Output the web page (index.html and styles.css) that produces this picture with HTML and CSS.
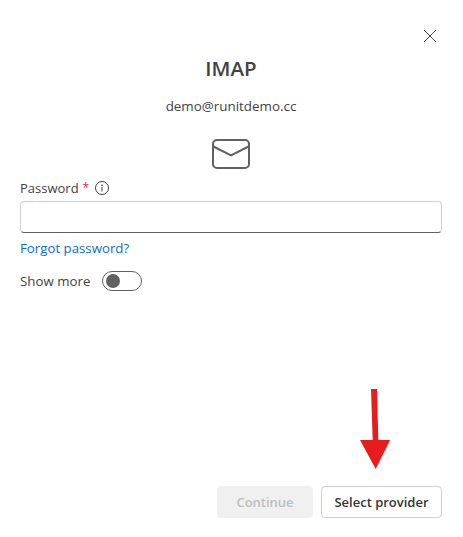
FILE: index.html
```html
<!DOCTYPE html>
<html>
<head lang="en">
    <meta charset="UTF-8">
    <title>IMAP</title>
    <link rel="stylesheet" href="styles.css">
</head>
<body>
<div class="dialog">
    <div class="close-row">
        <svg class="close" width="14" height="14" viewBox="0 0 14 14"><path d="M1 1l12 12M13 1L1 13" stroke="#424242" stroke-width="1" fill="none"/></svg>
    </div>
    <h1 class="title">IMAP</h1>
    <div class="email">demo@runitdemo.cc</div>
    <div class="icon-row">
        <svg width="38" height="30" viewBox="0 0 38 30"><rect x="1" y="1" width="36" height="28" rx="4" fill="none" stroke="#616161" stroke-width="2"/><path d="M1.5 7.5L19 16.5L36.5 7.5" fill="none" stroke="#616161" stroke-width="2"/></svg>
    </div>
    <div class="label">
        <span>Password</span><span class="req">*</span>
        <svg class="info" width="14" height="14" viewBox="0 0 14 14"><circle cx="7" cy="7" r="6.5" fill="none" stroke="#424242"/><path d="M7 6v4.5" stroke="#424242" fill="none"/><circle cx="7" cy="4.2" r="0.8" fill="#424242"/></svg>
    </div>
    <div class="input"></div>
    <a class="forgot">Forgot password?</a>
    <div class="show-more">
        <span>Show more</span>
        <div class="toggle"><div class="knob"></div></div>
    </div>
    <div class="footer">
        <button class="btn disabled">Continue</button>
        <button class="btn">Select provider</button>
    </div>
</div>
<svg class="arrow" width="30" height="81" viewBox="0 0 30 81"><path d="M11 0h6l1.3 51H30L15.7 80 0 51h12.7z" fill="#e81c1c"/></svg>
</body>
</html>
```

FILE: styles.css
```css
*{
    margin: 0;
    padding: 0;
    box-sizing: border-box;
}
html,body{
    height: 100%;
}
body{
    background: #fff;
    font-family: "Open Sans", "Liberation Sans", sans-serif;
    font-size: 13px;
    color: #424242;
}
.dialog{
    height: 100%;
    display: flex;
    flex-direction: column;
    padding: 29px 21px 19px 20px;
}
.close-row{
    display: flex;
    justify-content: flex-end;
    padding-right: 5px;
    height: 14px;
}
.title{
    margin-top: 11px;
    text-align: center;
    font-size: 20.5px;
    line-height: 28px;
    font-weight: 600;
}
.email{
    margin-top: 14px;
    text-align: center;
    font-size: 13.4px;
    line-height: 20px;
}
.icon-row{
    margin-top: 23px;
    display: flex;
    justify-content: center;
    height: 30px;
}
.label{
    margin-top: 9px;
    display: flex;
    align-items: center;
    line-height: 20px;
}
.req{
    color: #d13438;
    margin-left: 4px;
    font-size: 12px;
}
.info{
    margin-left: 6px;
}
.input{
    margin-top: 3px;
    height: 32px;
    border: 1px solid #d1d1d1;
    border-bottom-color: #616161;
    border-radius: 4px;
}
.forgot{
    margin-top: 5px;
    color: #0f6cbd;
    font-size: 13.25px;
    line-height: 20px;
}
.show-more{
    margin-top: 13px;
    display: flex;
    align-items: center;
    gap: 12px;
    font-size: 13.3px;
    line-height: 20px;
}
.toggle{
    width: 40px;
    height: 20px;
    border: 1px solid #616161;
    border-radius: 10px;
    display: flex;
    align-items: center;
    padding-left: 3px;
}
.knob{
    width: 14px;
    height: 14px;
    border-radius: 50%;
    background: #616161;
}
.footer{
    margin-top: auto;
    display: flex;
    justify-content: flex-end;
    gap: 8px;
}
.btn{
    height: 32px;
    width: 121px;
    background: #fff;
    border: 1px solid #d1d1d1;
    border-radius: 4px;
    font-family: inherit;
    font-size: 13px;
    font-weight: 600;
    color: #333;
}
.btn.disabled{
    width: 96px;
    background: #f0f0f0;
    border-color: #f0f0f0;
    color: #bdbdbd;
}
.arrow{
    position: absolute;
    left: 360px;
    top: 389px;
}
```
